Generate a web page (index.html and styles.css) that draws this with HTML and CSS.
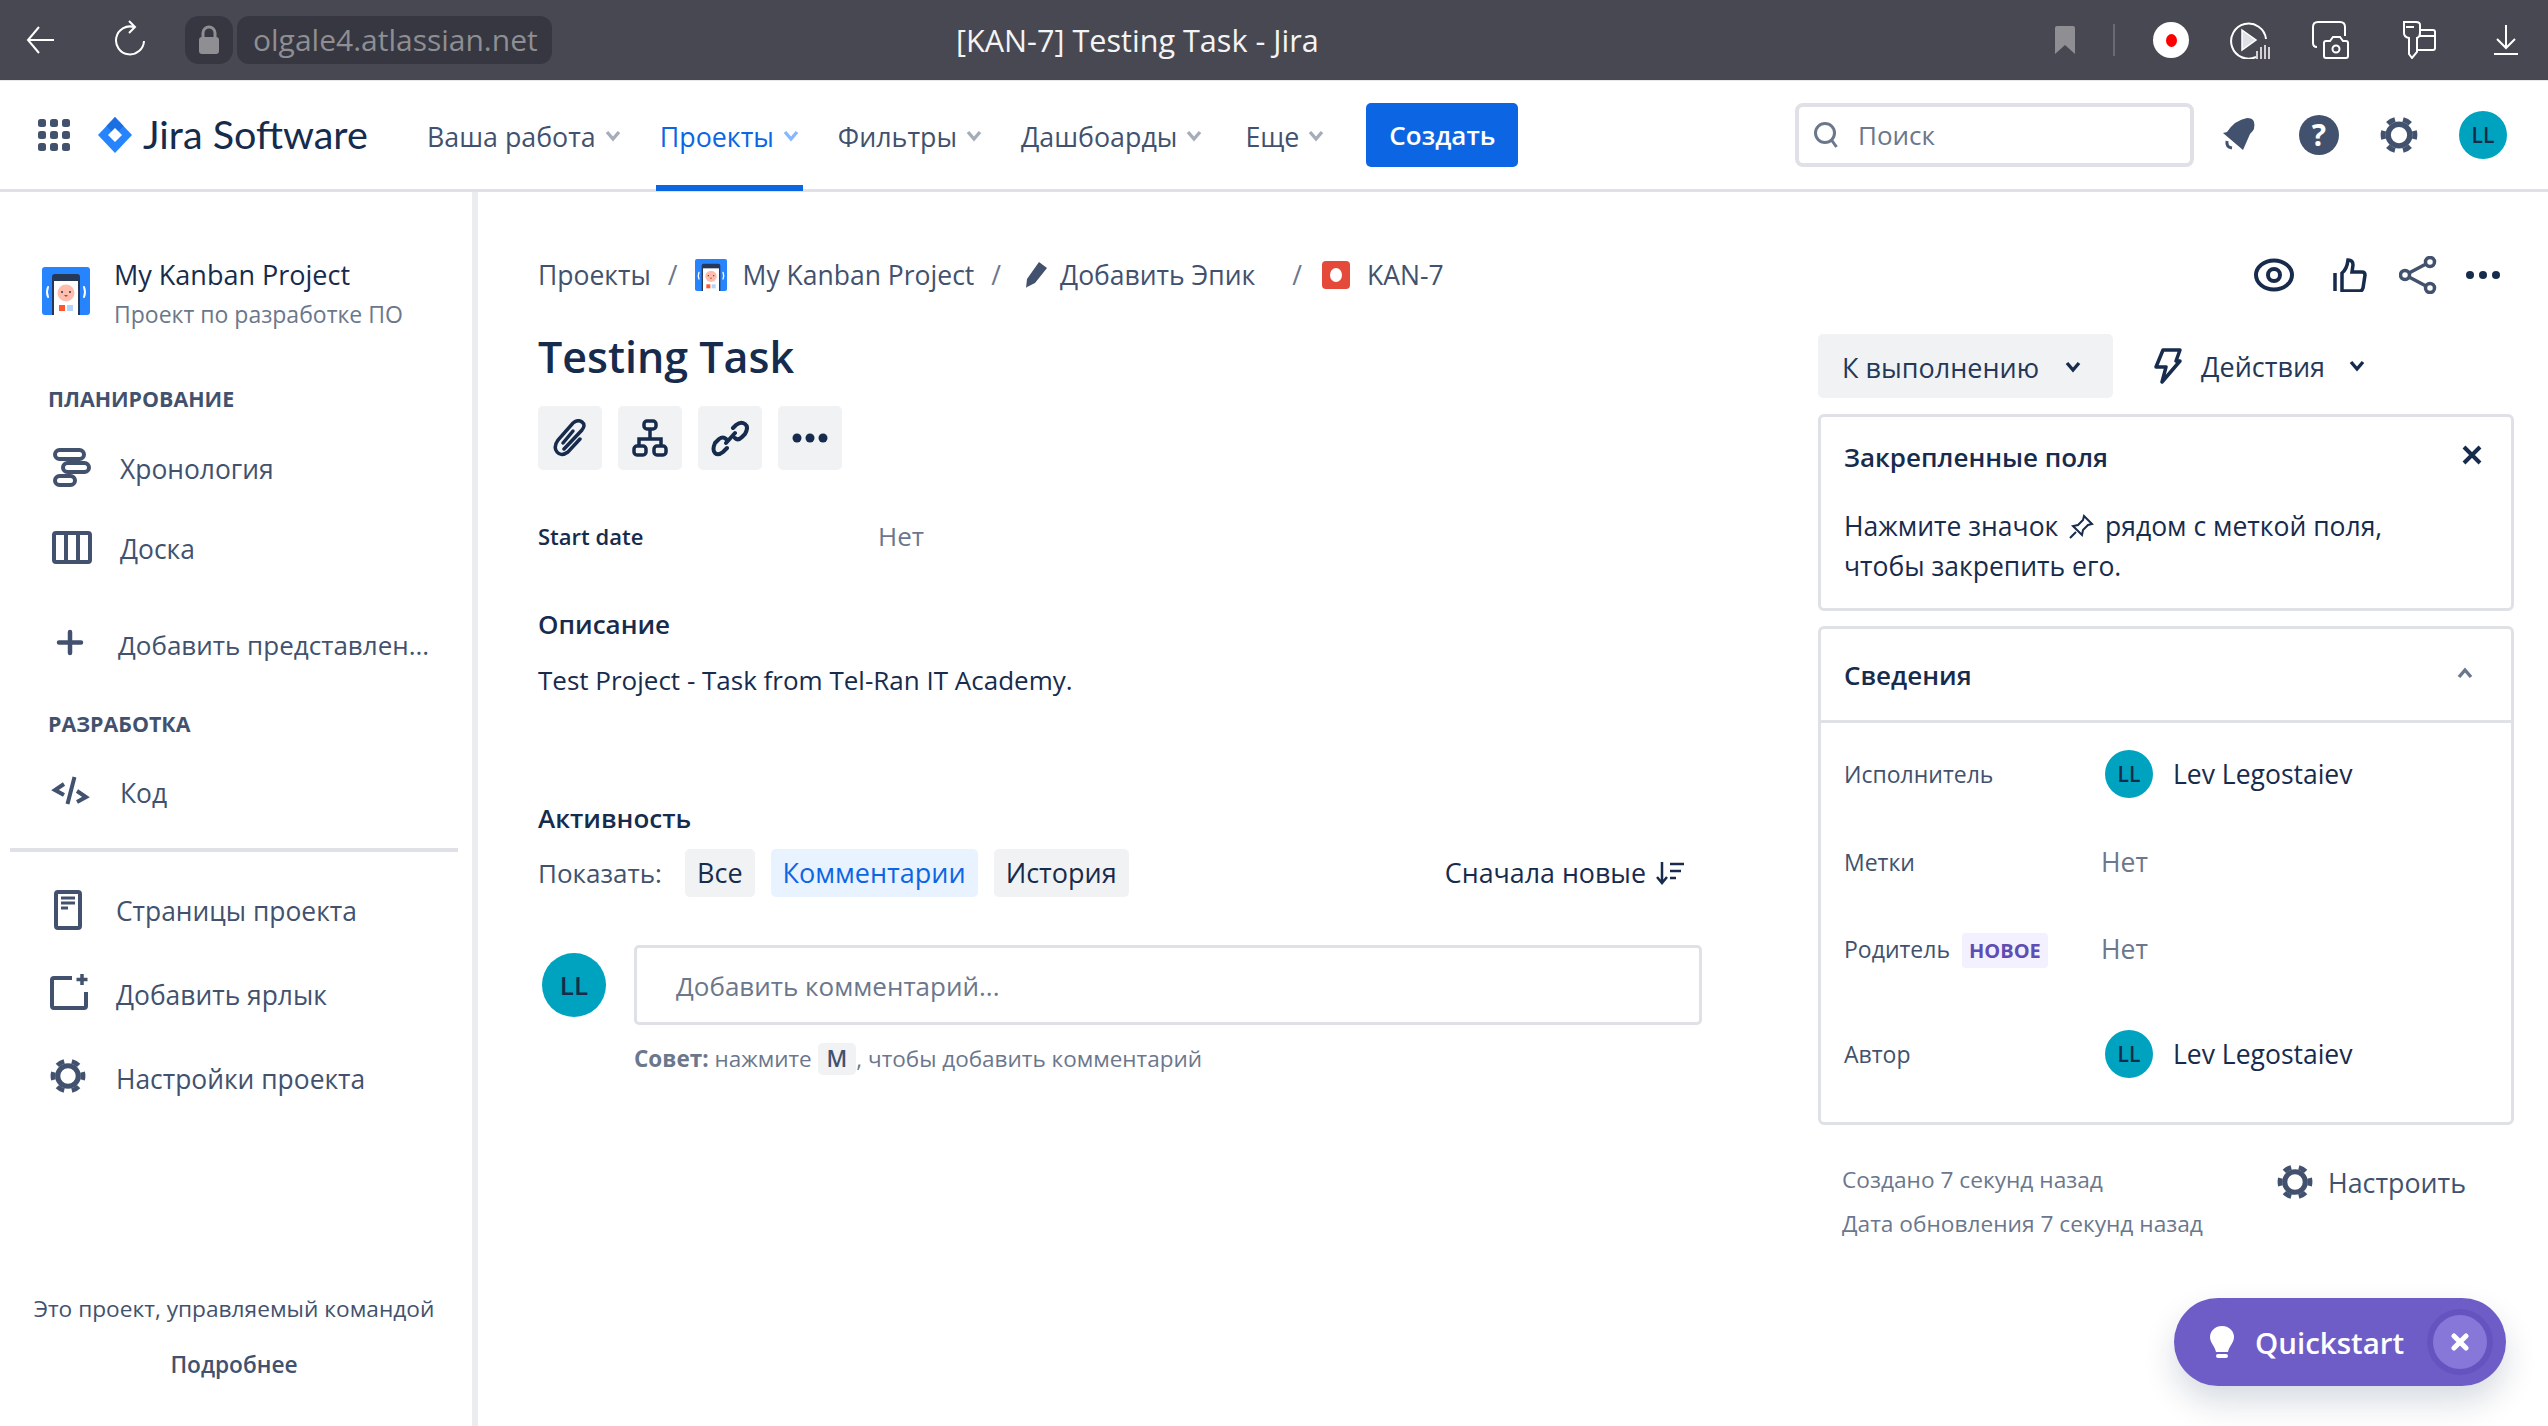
FILE: index.html
```html
<!DOCTYPE html>
<html lang="ru">
<head>
<meta charset="utf-8">
<title>[KAN-7] Testing Task - Jira</title>
<link rel="stylesheet" href="styles.css">
</head>
<body>
<svg class="defs" width="0" height="0" aria-hidden="true">
  <symbol id="gear" viewBox="0 0 48 48">
    <circle cx="24" cy="24" r="13" fill="none" stroke="currentColor" stroke-width="6.5"/>
    <circle cx="24" cy="24" r="19" fill="none" stroke="currentColor" stroke-width="6" pathLength="48" stroke-dasharray="4 4" stroke-dashoffset="2"/>
  </symbol>
  <symbol id="proj" viewBox="0 0 48 48">
    <rect width="48" height="48" rx="3" fill="#2684ff"/>
    <path d="M10 48V10q0-3 3-3h22q3 0 3 3v38z" fill="#253858"/>
    <rect x="12" y="14" width="24" height="34" fill="#fff"/>
    <circle cx="24" cy="26" r="8.5" fill="#ffbdad"/>
    <circle cx="20" cy="25" r="1" fill="#253858"/><circle cx="28" cy="25" r="1" fill="#253858"/>
    <path d="M22 28h4l-2 2z" fill="#de350b"/>
    <rect x="17" y="38" width="6" height="6" fill="#ff5630"/><rect x="25" y="38" width="6" height="6" fill="#b3d4ff"/>
    <path d="M6 20q-2 5 0 10M42 20q2 5 0 10" fill="none" stroke="#fff" stroke-width="2" stroke-linecap="round"/>
  </symbol>
  <symbol id="chev" viewBox="0 0 16 12">
    <path d="M2 2l6 7 6-7" fill="none" stroke="currentColor" stroke-width="3.4"/>
  </symbol>
</svg>

<header class="chrome">
  <div class="chrome-left">
    <svg class="chrome-back" width="34" height="30" viewBox="0 0 34 30"><path d="M29 15H3M14 2L3 15l11 13" fill="none" stroke="#fff" stroke-width="2"/></svg>
    <svg class="chrome-reload" width="34" height="38" viewBox="0 0 34 38"><path d="M20 7a14 14 0 1 0 10 14M15 1l6 6-6 6" fill="none" stroke="#fff" stroke-width="2"/></svg>
    <span class="lock-pill"><svg width="22" height="30" viewBox="0 0 22 30"><path d="M5 13V8a6 6 0 0 1 12 0v5" fill="none" stroke="#8e8e93" stroke-width="3"/><rect x="1" y="12" width="20" height="17" rx="3" fill="#8e8e93"/></svg></span>
    <span class="url-pill">olgale4.atlassian.net</span>
  </div>
  <div class="chrome-title">[KAN-7] Testing Task - Jira</div>
  <div class="chrome-right">
    <svg class="c-book" width="20" height="28" viewBox="0 0 20 28"><path d="M0 2q0-2 2-2h16q2 0 2 2v26l-10-9-10 9z" fill="#8e8e93"/></svg>
    <span class="c-sep"></span>
    <span class="c-rec"><span class="c-dot"></span></span>
    <svg class="c-play" width="42" height="38" viewBox="0 0 42 38"><path d="M26 36A17.500 17.500 0 1 1 36 18" fill="none" stroke="#fff" stroke-width="2"/><path d="M12 9l14 10-14 10z" fill="#dde0e4" stroke="#fff" stroke-width="1.500"/><path d="M27 38V30M31 38V26M35 38V24M39 38V26" stroke="#fff" stroke-width="1.500"/></svg>
    <svg class="c-cam" width="38" height="38" viewBox="0 0 38 38"><path d="M5 26Q1 26 1 22V6q0-5 5-5h22q5 0 5 5v9" fill="none" stroke="#fff" stroke-width="2"/><path d="M14 20h4l3-4h7l3 4h3q2 0 2 2v13q0 2-2 2H14q-2 0-2-2V22q0-2 2-2z" fill="none" stroke="#fff" stroke-width="2"/><circle cx="24" cy="28" r="3.500" fill="none" stroke="#fff" stroke-width="2"/></svg>
    <svg class="c-note" width="36" height="38" viewBox="0 0 36 38"><path d="M4 1h12q4 0 4 3v8q0 4-3 5v14l-5 6-3-4V17q-5-1-5-5V4q0-3 0-3z" fill="none" stroke="#fff" stroke-width="2"/><path d="M6 6h8" stroke="#fff" stroke-width="2"/><path d="M20 9h13q2 0 2 2v16q0 2-2 2H17M20 15h15" fill="none" stroke="#fff" stroke-width="2"/></svg>
    <svg class="c-dl" width="26" height="30" viewBox="0 0 26 30"><path d="M13 0v23M4 14l9 9 9-9M1 29h24" fill="none" stroke="#fff" stroke-width="2"/></svg>
  </div>
</header>

<nav class="topnav">
  <svg class="apps" width="32" height="32" viewBox="0 0 32 32" fill="#42526e">
    <rect x="0" y="0" width="8" height="8" rx="2.500"/><rect x="12" y="0" width="8" height="8" rx="2.500"/><rect x="24" y="0" width="8" height="8" rx="2.500"/>
    <rect x="0" y="12" width="8" height="8" rx="2.500"/><rect x="12" y="12" width="8" height="8" rx="2.500"/><rect x="24" y="12" width="8" height="8" rx="2.500"/>
    <rect x="0" y="24" width="8" height="8" rx="2.500"/><rect x="12" y="24" width="8" height="8" rx="2.500"/><rect x="24" y="24" width="8" height="8" rx="2.500"/>
  </svg>
  <svg class="jira-mark" width="34" height="36" viewBox="0 0 34 36"><path d="M17 0l17 18-17 18L0 18z" fill="#2684ff"/><path d="M17 0L8.500 9 17 18l8.500-9z" fill="#1c6fe0"/><path d="M17 11l7 7-7 7-7-7z" fill="#fff"/></svg>
  <span class="jira-word">Jira Software</span>
  <ul class="navlist">
    <li class="navitem">Ваша работа<svg class="navchev" width="16" height="12"><use href="#chev"/></svg></li>
    <li class="navitem navitem-active">Проекты<svg class="navchev" width="16" height="12"><use href="#chev"/></svg></li>
    <li class="navitem">Фильтры<svg class="navchev" width="16" height="12"><use href="#chev"/></svg></li>
    <li class="navitem">Дашбоарды<svg class="navchev" width="16" height="12"><use href="#chev"/></svg></li>
    <li class="navitem navitem-more">Еще<svg class="navchev" width="16" height="12"><use href="#chev"/></svg></li>
  </ul>
  <button class="create">Создать</button>
  <div class="nav-right">
    <div class="search">
      <svg width="28" height="30" viewBox="0 0 28 30"><circle cx="12" cy="13" r="9.500" fill="none" stroke="#6b778c" stroke-width="3"/><path d="M18.500 20l5 7" stroke="#6b778c" stroke-width="3"/></svg>
      <span>Поиск</span>
    </div>
    <span class="nav-slot"><svg width="36" height="36" viewBox="0 0 36 36"><path d="M6 15Q14 3 26 1q6 0 7 4 2 7-4 12L22 33 2 16z" fill="#42526e"/><path d="M6 24q-1 6 5 7" fill="none" stroke="#42526e" stroke-width="3"/></svg></span>
    <span class="nav-slot"><span class="help">?</span></span>
    <span class="nav-slot"><svg class="ic-gear" width="40" height="40"><use href="#gear"/></svg></span>
    <span class="avatar avatar-nav">LL</span>
  </div>
</nav>

<div class="page">
  <aside class="sidebar">
    <div class="proj-head">
      <svg class="proj-ic" width="48" height="48"><use href="#proj"/></svg>
      <div>
        <div class="proj-name">My Kanban Project</div>
        <div class="proj-sub">Проект по разработке ПО</div>
      </div>
    </div>
    <h4 class="side-h side-h-plan">ПЛАНИРОВАНИЕ</h4>
    <div class="side-item side-item-tall">
      <svg class="side-ic" width="48" height="48" viewBox="0 0 48 48" fill="none" stroke="#42526e" stroke-width="4"><rect x="9" y="5" width="29" height="9" rx="4.500"/><rect x="17" y="18" width="26" height="9" rx="4.500"/><rect x="9" y="31" width="20" height="9" rx="4.500"/></svg>
      <span>Хронология</span>
    </div>
    <div class="side-item side-item-tall">
      <svg class="side-ic" width="48" height="48" viewBox="0 0 48 48" fill="none" stroke="#42526e" stroke-width="4"><rect x="8" y="8" width="36" height="29" rx="2"/><path d="M20 8v29M32 8v29"/></svg>
      <span>Доска</span>
    </div>
    <div class="side-item side-item-tall side-item-add">
      <svg class="side-ic" width="48" height="48" viewBox="0 0 48 48" fill="none" stroke="#42526e" stroke-width="4.500" stroke-linecap="round"><path d="M24 11v21M13 21.500h22"/></svg>
      <span>Добавить представлен...</span>
    </div>
    <h4 class="side-h side-h-dev">РАЗРАБОТКА</h4>
    <div class="side-item side-item-tall">
      <svg class="side-ic" width="48" height="48" viewBox="0 0 48 48" fill="none" stroke="#42526e" stroke-width="4"><path d="M18 15l-9 6 9 5M31 22l9 6-9 5M28.500 8l-7 27"/></svg>
      <span>Код</span>
    </div>
    <div class="side-rule"></div>
    <div class="side-item side-item-low">
      <svg class="side-ic" width="48" height="48" viewBox="0 0 48 48" fill="none" stroke="#42526e" stroke-width="4"><rect x="10" y="5" width="24" height="36" rx="2"/><path d="M15 11h14M15 16h14M15 21h7" stroke-width="3"/></svg>
      <span>Страницы проекта</span>
    </div>
    <div class="side-item side-item-low">
      <svg class="side-ic" width="48" height="48" viewBox="0 0 48 48" fill="none" stroke="#42526e" stroke-width="4"><path d="M26 7H8q-2 0-2 2v26q0 2 2 2h30q2 0 2-2V21"/><path d="M36 3v11M30.500 8.500h11" stroke-width="3.500"/></svg>
      <span>Добавить ярлык</span>
    </div>
    <div class="side-item side-item-low">
      <svg class="side-ic" width="48" height="48" viewBox="0 0 48 48" color="#42526e"><use href="#gear" x="3" y="2" width="38" height="38"/></svg>
      <span>Настройки проекта</span>
    </div>
    <div class="side-foot">
      <p class="side-foot-t">Это проект, управляемый командой</p>
      <p class="side-foot-b">Подробнее</p>
    </div>
  </aside>

  <main class="content">
    <section class="col-left">
      <div class="crumbs">
        <span>Проекты</span><span class="sl sl-1">/</span>
        <svg class="cr-proj" width="32" height="32"><use href="#proj"/></svg><span>My Kanban Project</span><span class="sl sl-2">/</span>
        <svg class="cr-pen" width="24" height="28" viewBox="0 0 24 28"><path d="M15 1l8 6-12 15-8 4-1 1 1-9z" fill="#42526e"/></svg><span>Добавить Эпик</span><span class="sl sl-3">/</span>
        <span class="cr-bug"><span></span></span><span>KAN-7</span>
      </div>
      <h1 class="title">Testing Task</h1>
      <div class="tools">
        <span class="tool"><svg width="36" height="38" viewBox="0 0 36 38" fill="none" stroke="#172b4d" stroke-width="3.500" stroke-linecap="round"><path d="M12 30L30 11q4-5 0-8t-9 1L6 21q-5 7-1 12t11 0L28 20"/><path d="M21 12L11 24"/></svg></span>
        <span class="tool"><svg width="36" height="38" viewBox="0 0 36 38" fill="none" stroke="#172b4d" stroke-width="3.500"><rect x="12" y="2" width="12" height="8" rx="3"/><path d="M18 10v10M7 27v-7h22v7"/><rect x="2" y="27" width="12" height="9" rx="3"/><rect x="22" y="27" width="12" height="9" rx="3"/></svg></span>
        <span class="tool"><svg width="38" height="38" viewBox="0 0 38 38" fill="none" stroke="#172b4d" stroke-width="4" stroke-linecap="round"><path d="M15 24l9-10M22 9l3-3q5-4 9-1t0 10l-3 3q-4 4-7 1M16 29l-4 4q-5 4-8 1t0-10l4-4q4-3 7 0"/></svg></span>
        <span class="tool"><svg width="36" height="10" viewBox="0 0 36 10" fill="#172b4d"><circle cx="5" cy="5" r="4.500"/><circle cx="18" cy="5" r="4.500"/><circle cx="31" cy="5" r="4.500"/></svg></span>
      </div>
      <div class="field-row"><span class="field-l">Start date</span><span class="none-v">Нет</span></div>
      <h3 class="sec-h sec-desc">Описание</h3>
      <p class="desc">Test Project - Task from Tel-Ran IT Academy.</p>
      <h3 class="sec-h sec-act">Активность</h3>
      <div class="filters">
        <span class="f-label">Показать:</span>
        <span class="chip">Все</span>
        <span class="chip chip-on">Комментарии</span>
        <span class="chip">История</span>
        <span class="sort">Сначала новые <svg width="28" height="24" viewBox="0 0 28 24" fill="none" stroke="#172b4d" stroke-width="2.500"><path d="M6 1v20M1 16l5 6 5-6M14 3h14M14 10h11M14 17h6"/></svg></span>
      </div>
      <div class="comment">
        <span class="avatar avatar-c">LL</span>
        <div class="c-input">Добавить комментарий...</div>
      </div>
      <p class="tip"><b>Совет:</b> нажмите <kbd>M</kbd>, чтобы добавить комментарий</p>
    </section>

    <section class="col-right">
      <div class="issue-actions">
        <svg class="ia ia-eye" width="42" height="34" viewBox="0 0 42 34" fill="none" stroke="#172b4d" stroke-width="4"><ellipse cx="21" cy="17" rx="18" ry="14.500"/><circle cx="21" cy="17" r="6"/></svg>
        <svg class="ia ia-like" width="34" height="34" viewBox="0 0 34 34" fill="none" stroke="#172b4d" stroke-width="3.500"><path d="M2 15v18M9 33V15q5-4 6-13 5 0 5 5l-1 7h10q3 0 3 3l-2 13q-1 3-3 3z"/></svg>
        <svg class="ia ia-share" width="38" height="38" viewBox="0 0 38 38" fill="none" stroke="#42526e" stroke-width="3.500"><circle cx="31" cy="6" r="4.500"/><circle cx="6" cy="19" r="4.500"/><circle cx="31" cy="32" r="4.500"/><path d="M10 17l17-9M10 21l17 9"/></svg>
        <svg class="ia ia-more" width="36" height="10" viewBox="0 0 36 10" fill="#172b4d"><circle cx="5" cy="5" r="4"/><circle cx="18" cy="5" r="4"/><circle cx="31" cy="5" r="4"/></svg>
      </div>
      <div class="status-row">
        <span class="status">К выполнению<svg width="16" height="12" class="st-chev"><use href="#chev"/></svg></span>
        <span class="actions"><svg width="28" height="36" viewBox="0 0 28 36" fill="none" stroke="#172b4d" stroke-width="3.500" stroke-linejoin="round"><path d="M9 2h17l-4 11h4L8 34l4-15H2z"/></svg><span class="act-t">Действия</span><svg width="16" height="12" class="act-chev"><use href="#chev"/></svg></span>
      </div>
      <div class="panel panel-pin">
        <div class="panel-h">
          <h3>Закрепленные поля</h3>
          <svg class="pin-x" width="20" height="20" viewBox="0 0 20 20"><path d="M2 2l16 16M18 2L2 18" stroke="#172b4d" stroke-width="4"/></svg>
        </div>
        <p class="pin-t">Нажмите значок <svg class="pin-ic" width="26" height="26" viewBox="0 0 26 26" fill="none" stroke="#172b4d" stroke-width="2"><path d="M16 2l8 8-4 1-5 5-1 5-9-9 5-1 5-5zM8 18l-6 6"/></svg> рядом с меткой поля, чтобы закрепить его.</p>
      </div>
      <div class="panel panel-det">
        <div class="det-h">
          <h3>Сведения</h3>
          <svg width="16" height="12" class="det-chev"><use href="#chev"/></svg>
        </div>
        <div class="det-row det-r1"><span class="det-l">Исполнитель</span><span class="det-v"><span class="avatar avatar-s">LL</span><span class="person">Lev Legostaiev</span></span></div>
        <div class="det-row det-r2"><span class="det-l">Метки</span><span class="det-v none-v">Нет</span></div>
        <div class="det-row det-r3"><span class="det-l">Родитель <em class="badge">НОВОЕ</em></span><span class="det-v none-v">Нет</span></div>
        <div class="det-row det-r4"><span class="det-l">Автор</span><span class="det-v"><span class="avatar avatar-s">LL</span><span class="person">Lev Legostaiev</span></span></div>
      </div>
      <div class="meta">
        <div class="stamps"><div>Создано 7 секунд назад</div><div>Дата обновления 7 секунд назад</div></div>
        <div class="cfg"><svg class="ic-gear" width="38" height="38"><use href="#gear"/></svg><span>Настроить</span></div>
      </div>
    </section>
  </main>
</div>

<div class="quick">
  <svg width="28" height="32" viewBox="0 0 28 32" fill="#fff"><path d="M14 0c8 0 12 6 12 11 0 6-5 9-6 15H8C7 20 2 17 2 11 2 6 6 0 14 0z"/><rect x="8" y="28" width="12" height="4" rx="2"/></svg>
  <span class="quick-t">Quickstart</span>
  <span class="quick-x"><svg width="18" height="18" viewBox="0 0 18 18"><path d="M3 3l12 12M15 3L3 15" stroke="#fff" stroke-width="5" stroke-linecap="round"/></svg></span>
</div>
</body>
</html>
```

FILE: styles.css
```css
* { box-sizing: border-box; }
html, body { margin: 0; padding: 0; height: 100%; }
body {
  font-family: "Open Sans", "Noto Sans", sans-serif;
  font-size: 26px;
  color: #172b4d;
  background: #fff;
  overflow: hidden;
  display: flex;
  flex-direction: column;
  position: relative;
}
.defs { position: absolute; }
h1, h3, h4, p, ul { margin: 0; padding: 0; }
ul { list-style: none; }

.chrome {
  height: 81px;
  flex: none;
  background: #484852;
  border-bottom: 1px solid #e8e8ea;
  display: grid;
  grid-template-columns: 956px 361px 1fr;
  align-items: center;
}
.chrome-left { display: flex; align-items: center; }
.chrome-back { margin-left: 25px; }
.chrome-reload { margin-left: 55px; margin-right: 37px; margin-top: -2px; }
.lock-pill {
  width: 48px; height: 48px; background: #363740; border-radius: 14px;
  display: flex; align-items: center; justify-content: center;
}
.url-pill {
  margin-left: 4px; width: 315px; height: 48px; background: #363740; border-radius: 12px;
  color: #8e8e93; font-size: 30px; line-height: 48px; padding-left: 16px; white-space: nowrap;
}
.chrome-title { color: #f4f4f5; font-size: 30.6px; white-space: nowrap; }
.chrome-right { display: flex; align-items: center; justify-content: flex-end; padding-right: 29px; }
.c-sep { width: 2px; height: 32px; background: #6a6a72; margin-left: 38px; }
.c-rec {
  width: 36px; height: 36px; border-radius: 50%; background: #fff; margin-left: 38px;
  display: flex; align-items: center; justify-content: center;
}
.c-dot { width: 11px; height: 13px; border-radius: 50%; background: #f00; }
.c-play { margin-left: 41px; }
.c-cam { margin-left: 40px; }
.c-note { margin-left: 50px; }
.c-dl { margin-left: 57px; }

.topnav {
  height: 111px;
  flex: none;
  border-bottom: 3px solid #dfe1e6;
  display: flex;
  align-items: center;
  padding-left: 38px;
}
.jira-word { font-family: "Lato", sans-serif; font-size: 39.5px; margin-left: 11px; margin-top: -3px; width: 280px; white-space: nowrap; color: #172b4d; }
.jira-mark { margin-left: 28px; }
.navlist { display: flex; align-self: stretch; gap: 31px; font-size: 26.8px; }
.navitem {
  display: flex; align-items: center; padding: 0 4px; color: #42526e; white-space: nowrap;
  border-bottom: 6px solid transparent; margin-bottom: -2px; padding-top: 6px;
}
.navitem-active { color: #0c66e4; border-bottom-color: #0c66e4; }
.navitem-more { margin-left: 4px; }
.navchev { margin-left: 9px; color: #a5adba; }
.navitem-active .navchev { color: #85b8ff; }
.create {
  margin-left: 38px; width: 152px; height: 64px; background: #0c66e4; color: #fff; border: 0; border-radius: 5px;
  font: 600 26px "Open Sans", sans-serif;
}
.nav-right { margin-left: auto; display: flex; align-items: center; padding-right: 41px; }
.search {
  width: 399px; height: 64px; border: 4px solid #dfe1e6; border-radius: 8px; margin-right: 5px;
  display: flex; align-items: center; padding-left: 14px; color: #6b778c;
}
.search span { margin-left: 17px; }
.nav-slot { width: 80px; display: flex; justify-content: center; align-items: center; color: #42526e; }
.help {
  width: 40px; height: 40px; border-radius: 50%; background: #42526e; color: #fff;
  font-weight: 700; font-size: 30px; line-height: 40px; text-align: center;
}
.ic-gear { color: #42526e; }
.avatar {
  display: inline-flex; align-items: center; justify-content: center; flex: none;
  width: 48px; height: 48px; border-radius: 50%; background: #00a3bf; color: #172b4d;
  font-size: 21px; font-weight: 600;
}
.avatar-nav { margin-left: 20px; }
.avatar-c { width: 64px; height: 64px; font-size: 26px; margin-left: 4px; margin-top: 8px; }

.page { flex: 1; display: flex; min-height: 0; }
.sidebar {
  width: 478px; flex: none; border-right: 6px solid #ebecf0;
  display: flex; flex-direction: column; color: #42526e; font-size: 26.4px;
}
.proj-head { display: flex; gap: 24px; padding: 64px 0 0 42px; }
.proj-ic { margin-top: 11px; }
.proj-name { font-size: 27px; font-weight: 500; line-height: 37px; padding-bottom: 2px; color: #172b4d; white-space: nowrap; }
.proj-sub { font-size: 23px; line-height: 39px; color: #6b778c; white-space: nowrap; }
.side-h { font-size: 21.4px; font-weight: 700; line-height: 40px; padding-left: 48px; color: #42526e; }
.side-h-plan { margin-top: 45px; margin-bottom: 10px; }
.side-h-dev { margin-top: 19px; margin-bottom: 9px; }
.side-item { display: flex; align-items: center; padding-left: 46px; white-space: nowrap; color: #42526e; }
.side-ic { flex: none; margin-right: 26px; }
.side-item-tall { height: 80px; }
.side-item-add { margin-top: 16px; font-size: 26px; }
.side-item-add .side-ic { margin-right: 24px; }
.side-item-low { height: 84px; }
.side-rule { height: 4px; background: #dfe1e6; margin: 15px 14px 17px 10px; }
.side-item-low .side-ic { margin-right: 22px; }
.side-foot { margin-top: auto; padding: 0 4px 41px 0; text-align: center; font-size: 22.7px; line-height: 40px; }
.side-foot-t { white-space: nowrap; }
.side-foot-b { margin-top: 16px; font-weight: 600; }

.content { flex: 1; display: flex; padding-left: 60px; min-width: 0; }
.col-left { width: 1164px; flex: none; padding-top: 58px; }
.col-right { width: 696px; flex: none; margin-left: 116px; padding-top: 58px; }

.crumbs { height: 50px; display: flex; align-items: center; color: #42526e; white-space: nowrap; font-size: 26.5px; }
.sl { color: #6b778c; }
.sl-1 { margin: 0 17px; }
.sl-2 { margin: 0 23px 0 17px; }
.sl-3 { margin: 0 20px 0 37px; }
.cr-proj { margin-right: 16px; }
.cr-pen { margin-right: 12px; }
.cr-bug {
  width: 28px; height: 28px; background: #e5493a; border-radius: 4px; margin-right: 17px;
  display: flex; align-items: center; justify-content: center;
}
.cr-bug span { width: 12px; height: 14px; border-radius: 50%; background: #fff; }
.title { font-size: 43px; font-weight: 600; line-height: 60px; margin-top: 27px; color: #172b4d; }
.tools { display: flex; gap: 16px; margin-top: 19px; }
.tool {
  width: 64px; height: 64px; background: #f1f2f4; border-radius: 5px;
  display: flex; align-items: center; justify-content: center;
}
.field-row { margin-top: 46px; height: 40px; display: flex; align-items: center; }
.field-l { width: 340px; font-size: 22px; font-weight: 600; color: #172b4d; }
.none-v { color: #6b778c; }
.sec-h { font-size: 26px; font-weight: 600; line-height: 40px; color: #172b4d; }
.sec-desc { margin-top: 48px; }
.desc { margin-top: 16px; line-height: 40px; color: #172b4d; }
.sec-act { margin-top: 98px; }
.filters { margin-top: 10px; height: 48px; display: flex; align-items: center; white-space: nowrap; padding-top: 1px; }
.f-label { width: 147px; color: #42526e; }
.chip {
  height: 48px; padding: 0 12px; border-radius: 5px; background: #f1f2f4; margin-right: 16px;
  line-height: 48px; font-weight: 500; color: #172b4d; font-size: 27px;
}
.chip-on { background: #e9f2ff; color: #0c66e4; }
.sort { margin-left: auto; margin-right: 18px; font-weight: 500; color: #172b4d; display: flex; align-items: center; gap: 10px; font-size: 26.8px; }
.comment { display: flex; margin-top: 49px; }
.c-input {
  margin-left: 28px; flex: 1; height: 80px; border: 3px solid #dfe1e6; border-radius: 5px;
  color: #6b778c; line-height: 76px; padding-left: 39px;
}
.tip { margin-top: 14px; padding-left: 96px; font-size: 22.5px; line-height: 40px; color: #6b778c; white-space: nowrap; }
.tip kbd {
  display: inline-block; font: 600 22.5px "Open Sans", sans-serif; background: #f1f2f4; color: #42526e;
  border-radius: 5px; padding: 0 9px; line-height: 32px;
}

.issue-actions { height: 50px; display: flex; align-items: center; }
.ia-eye { margin-left: 435px; }
.ia-like { margin-left: 38px; }
.ia-share { margin-left: 32px; }
.ia-more { margin-left: 28px; }
.status-row { margin-top: 34px; display: flex; align-items: center; height: 64px; font-size: 27px; }
.status {
  width: 295px; height: 64px; background: #f1f2f4; border-radius: 5px; padding: 2px 0 0 24px;
  display: flex; align-items: center; white-space: nowrap; font-weight: 500; color: #253858;
}
.st-chev { margin-left: auto; margin-right: 32px; color: #172b4d; }
.actions { display: flex; align-items: center; margin-left: 41px; font-weight: 500; color: #253858; }
.act-t { margin-left: 19px; }
.act-chev { margin-left: 24px; color: #172b4d; }
.panel { border: 3px solid #dfe1e6; border-radius: 6px; margin-top: 16px; }
.panel-pin { height: 197px; padding: 0 23px; }
.panel-h { display: flex; align-items: center; justify-content: space-between; height: 80px; }
.panel-h h3, .det-h h3 { font-size: 26px; font-weight: 600; color: #172b4d; }
.pin-x { margin-right: 6px; margin-top: -4px; }
.pin-t { line-height: 40px; margin-top: 9px; width: 620px; color: #172b4d; font-size: 26.5px; }
.pin-ic { vertical-align: -4px; margin: 0 4px 0 3px; }
.panel-det { height: 499px; margin-top: 15px; }
.det-h { height: 94px; padding: 0 23px; border-bottom: 3px solid #dfe1e6; display: flex; align-items: center; justify-content: space-between; }
.det-chev { transform: rotate(180deg); color: #6b778c; margin-right: 15px; margin-top: -3px; }
.det-row { display: flex; align-items: center; padding-left: 23px; height: 48px; }
.det-l { width: 257px; font-size: 23px; font-weight: 500; color: #42526e; white-space: nowrap; }
.det-r1 { margin-top: 27px; }
.det-r2 { margin-top: 40px; }
.det-r3 { margin-top: 39px; }
.det-r4 { margin-top: 57px; }
.det-v { display: flex; align-items: center; font-size: 26.5px; }
.avatar-s { margin-left: 4px; }
.person { margin-left: 20px; color: #172b4d; }
.badge {
  font-style: normal; font-weight: 700; font-size: 20px; background: #f3f0ff; color: #5e4db2;
  border-radius: 4px; padding: 4px 7px; margin-left: 6px;
}
.meta { display: flex; justify-content: space-between; margin-top: 33px; padding-left: 24px; padding-right: 48px; }
.stamps { font-size: 22.7px; line-height: 44px; color: #6b778c; white-space: nowrap; }
.cfg { display: flex; align-items: center; gap: 14px; height: 44px; font-weight: 500; color: #42526e; margin-top: 2px; font-size: 26.8px; }

.quick {
  position: absolute; left: 2174px; top: 1298px; width: 332px; height: 88px; border-radius: 44px;
  background: #6e5dc6; box-shadow: 0 16px 32px rgba(9, 30, 66, .16);
  display: flex; align-items: center; padding-left: 34px; color: #fff;
}
.quick-t { font-size: 29.5px; font-weight: 600; margin-left: 19px; }
.quick-x {
  position: absolute; left: 259px; top: 17px; width: 54px; height: 54px; border-radius: 50%;
  background: #8777d9; box-shadow: 0 0 0 6px #6554c0;
  display: flex; align-items: center; justify-content: center;
}
```
